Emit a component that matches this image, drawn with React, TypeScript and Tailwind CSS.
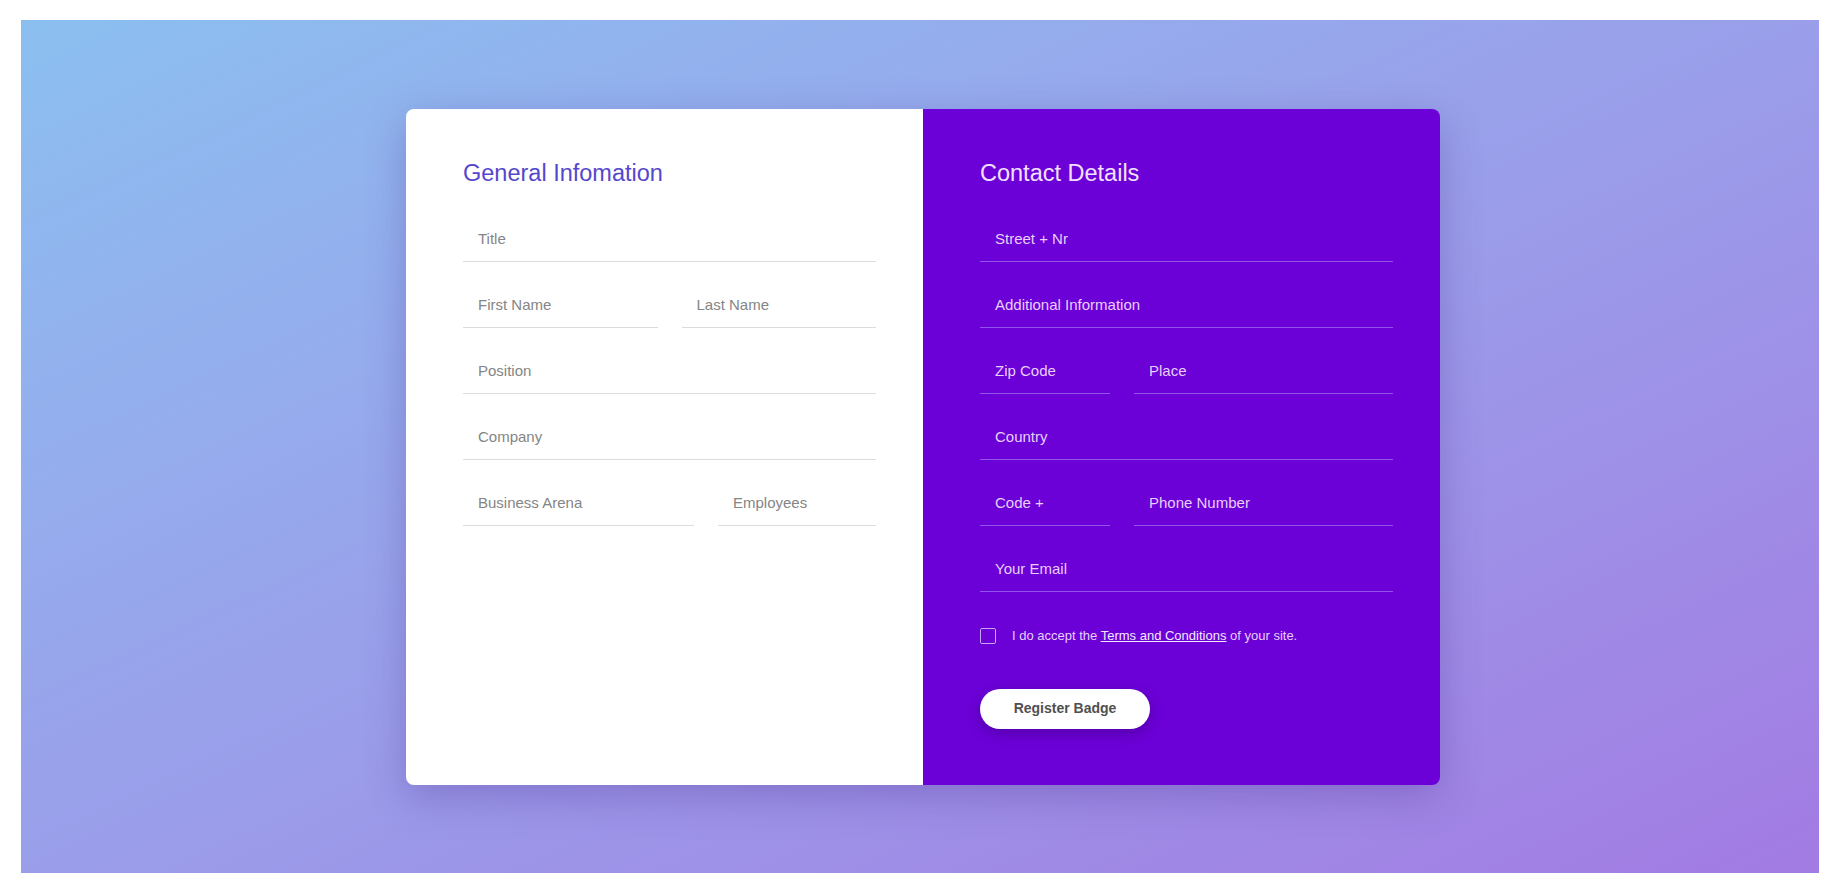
import React from 'react';

interface FieldProps {
  placeholder: string;
  dark?: boolean;
}

const Field: React.FC<FieldProps> = ({ placeholder, dark }) => (
  <div className="mb-5">
    <input
      type="text"
      placeholder={placeholder}
      className={`block h-[46px] w-full border-b bg-transparent pl-[15px] text-[15px] outline-none ${
        dark
          ? 'border-[#9253ea] text-white placeholder:text-[#e8cffc]'
          : 'border-[#dcdcdc] text-gray-700 placeholder:text-[#858585]'
      }`}
    />
  </div>
);

const App: React.FC = () => {
  return (
    <div className="h-screen bg-white px-[21px] pt-5 pb-[23px] font-['Liberation_Sans',Arial,sans-serif]">
      <div className="flex h-full items-center justify-center bg-linear-to-br from-[#8bbff0] to-[#a27be3] pl-[6px]">
        <div className="flex w-[1034px] rounded-lg shadow-[0_12px_40px_rgba(70,40,140,0.3)]">
          {/* General information */}
          <div className="w-1/2 rounded-l-lg bg-white pt-[46px] pr-[47px] pl-[57px]">
            <h2 className="mb-[25px] text-[23.5px] leading-[36px] text-[#5547cc]">General Infomation</h2>
            <Field placeholder="Title" />
            <div className="grid grid-cols-2 gap-6">
              <Field placeholder="First Name" />
              <Field placeholder="Last Name" />
            </div>
            <Field placeholder="Position" />
            <Field placeholder="Company" />
            <div className="grid grid-cols-[231px_1fr] gap-6">
              <Field placeholder="Business Arena" />
              <Field placeholder="Employees" />
            </div>
          </div>

          {/* Contact details */}
          <div className="w-1/2 rounded-r-lg bg-[#6b00d7] pt-[46px] pr-[47px] pb-[56px] pl-[57px]">
            <h2 className="mb-[25px] text-[23.5px] leading-[36px] text-[#f3e0ff]">Contact Details</h2>
            <Field dark placeholder="Street + Nr" />
            <Field dark placeholder="Additional Information" />
            <div className="grid grid-cols-[130px_1fr] gap-6">
              <Field dark placeholder="Zip Code" />
              <Field dark placeholder="Place" />
            </div>
            <Field dark placeholder="Country" />
            <div className="grid grid-cols-[130px_1fr] gap-6">
              <Field dark placeholder="Code +" />
              <Field dark placeholder="Phone Number" />
            </div>
            <Field dark placeholder="Your Email" />

            <label className="flex h-12 items-center gap-4 text-[13px] text-[#e8cffc]">
              <input
                type="checkbox"
                className="h-4 w-4 shrink-0 appearance-none rounded-[2px] border border-[#c9a5f7] bg-transparent"
              />
              <span>
                I do accept the{' '}
                <a href="#" className="text-[#f5e8ff] underline">
                  Terms and Conditions
                </a>{' '}
                of your site.
              </span>
            </label>

            <button className="mt-[29px] h-10 w-[170px] rounded-full bg-white text-[14px] font-bold text-[#505050] shadow-[0_4px_14px_rgba(0,0,0,0.22)]">
              Register Badge
            </button>
          </div>
        </div>
      </div>
    </div>
  );
};

export default App;
